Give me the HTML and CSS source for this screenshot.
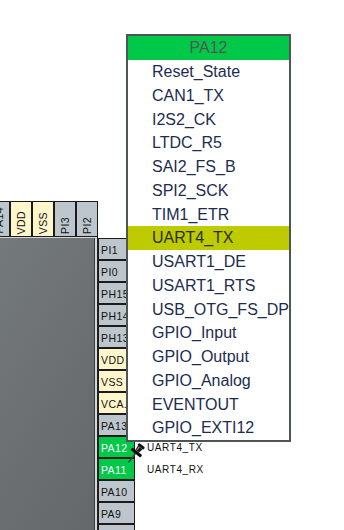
FILE: index.html
```html
<!DOCTYPE html>
<html lang="en">
<head>
    <meta charset="UTF-8">
    <title>Pinout view</title>
    <link rel="stylesheet" href="styles.css">
</head>
<body>
    <div class="view">
        <div class="board">
            <div class="top-pins">
                <div class="tpin gray"><span>PA14</span></div>
                <div class="tpin power"><span>VDD</span></div>
                <div class="tpin power"><span>VSS</span></div>
                <div class="tpin gray"><span>PI3</span></div>
                <div class="tpin gray"><span>PI2</span></div>
            </div>
            <div class="chip-row">
                <div class="chip"></div>
                <div class="rpins">
                    <div class="rrow"><div class="rpin gray">PI1</div></div>
                    <div class="rrow"><div class="rpin gray">PI0</div></div>
                    <div class="rrow"><div class="rpin gray">PH15</div></div>
                    <div class="rrow"><div class="rpin gray">PH14</div></div>
                    <div class="rrow"><div class="rpin gray">PH13</div></div>
                    <div class="rrow"><div class="rpin power">VDD</div></div>
                    <div class="rrow"><div class="rpin power">VSS</div></div>
                    <div class="rrow"><div class="rpin power">VCA..</div></div>
                    <div class="rrow"><div class="rpin gray">PA13</div></div>
                    <div class="rrow"><div class="rpin used">PA12</div><span class="signal">UART4_TX</span></div>
                    <div class="rrow"><div class="rpin used">PA11</div><span class="signal">UART4_RX</span></div>
                    <div class="rrow"><div class="rpin gray">PA10</div></div>
                    <div class="rrow"><div class="rpin gray">PA9</div></div>
                    <div class="rrow"><div class="rpin gray"></div></div>
                </div>
            </div>
        </div>

        <!-- locked pin marker -->
        <svg class="pushpin" width="20" height="24" viewBox="0 0 18 22">
            <g transform="rotate(38 9 10)">
                <line x1="9" y1="11" x2="9" y2="21" stroke="#444" stroke-width="1.4"/>
                <rect x="5.5" y="1" width="7" height="2.6" rx="1" fill="#111"/>
                <path d="M6.3 3.5 L11.7 3.5 L11.1 8 L6.9 8 Z" fill="#1c1c1c"/>
                <path d="M7.5 3.8 L8.6 3.8 L8.4 7.6 L7.6 7.6 Z" fill="#8a8a8a"/>
                <rect x="3.2" y="8" width="11.6" height="3" rx="1" fill="#0e0e0e"/>
            </g>
        </svg>

        <div class="popup">
            <div class="popup-head">PA12</div>
            <ul class="popup-list">
                <li>Reset_State</li>
                <li>CAN1_TX</li>
                <li>I2S2_CK</li>
                <li>LTDC_R5</li>
                <li>SAI2_FS_B</li>
                <li>SPI2_SCK</li>
                <li>TIM1_ETR</li>
                <li class="current">UART4_TX</li>
                <li>USART1_DE</li>
                <li>USART1_RTS</li>
                <li>USB_OTG_FS_DP</li>
                <li>GPIO_Input</li>
                <li>GPIO_Output</li>
                <li>GPIO_Analog</li>
                <li>EVENTOUT</li>
                <li>GPIO_EXTI12</li>
            </ul>
        </div>
    </div>
</body>
</html>
```

FILE: styles.css
```css
body {
    margin: 0;
    background: #fff;
    font-family: "Liberation Sans", Arial, sans-serif;
}

.view {
    position: relative;
    width: 344px;
    height: 530px;
    overflow: hidden;
    background: #fff;
}

.board {
    padding-top: 201px;
}

.top-pins {
    display: flex;
    margin-left: -12px;
    height: 36px;
}

.tpin {
    box-sizing: border-box;
    width: 22px;
    height: 36px;
    border: 1px solid #1b1b1b;
    display: flex;
    flex-direction: column;
    justify-content: flex-end;
    align-items: center;
    padding-bottom: 2px;
    font-size: 10.5px;
    color: #111;
}

.tpin span {
    writing-mode: vertical-rl;
    transform: rotate(180deg);
    letter-spacing: 0.4px;
    line-height: 12px;
}

.gray { background: #bdc6cc; }
.power { background: #fff6cc; }
.used { background: #00c94a; color: #fff !important; }

.chip-row {
    display: flex;
    align-items: flex-start;
}

.chip {
    box-sizing: border-box;
    width: 98px;
    height: 300px;
    background: linear-gradient(120deg, #74797b 0%, #6a6e70 60%, #64686a 100%);
    border-right: 1px solid #1f2222;
    box-shadow: inset 0 1px 0 #d3d7d7, inset -2px 0 0 #d3d7d7, inset -3px 0 0 #3a3d3e;
}

.rpins {
    display: flex;
    flex-direction: column;
    margin-top: 1px;
}

.rrow {
    display: flex;
    align-items: center;
}

.rpin {
    box-sizing: border-box;
    width: 37px;
    height: 22px;
    border: 1px solid #1b1b1b;
    padding: 3px 0 0 2px;
    font-size: 10.5px;
    line-height: 16px;
    letter-spacing: 0.4px;
    color: #111;
}

.signal {
    margin-left: 12px;
    font-size: 10px;
    letter-spacing: 0.6px;
    color: #111;
}

.pushpin {
    position: absolute;
    left: 126px;
    top: 442px;
}

.popup {
    position: absolute;
    left: 126px;
    top: 34px;
    width: 165px;
    height: 408px;
    box-sizing: border-box;
    border: 2px solid #4f5454;
    background: #fff;
    overflow: hidden;
}

.popup-head {
    height: 24px;
    line-height: 24px;
    background: #00c94a;
    color: #555;
    font-size: 16px;
    text-align: center;
}

.popup-list {
    list-style: none;
    margin: 0;
    padding: 0;
}

.popup-list li {
    height: 23.75px;
    line-height: 23.75px;
    padding-left: 24px;
    font-size: 16px;
    color: #1d2c50;
    white-space: nowrap;
}

.popup-list li.current {
    background: #bdcb00;
    color: #2a2f1a;
}
```
